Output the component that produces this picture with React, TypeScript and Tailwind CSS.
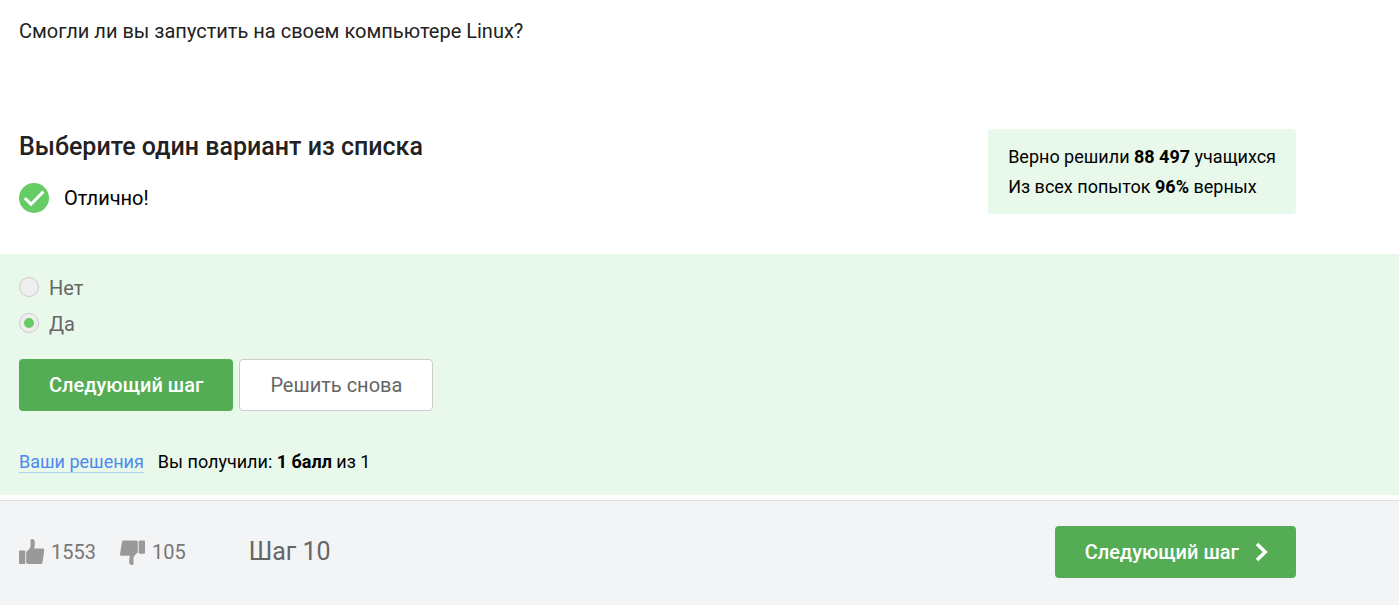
import { useState } from 'react';

function ThumbUp() {
  return (
    <svg viewBox="0 0 26 26" className="size-[26px] shrink-0" fill="#999999" aria-hidden="true">
      <rect x="0" y="11.6" width="6.3" height="13.4" rx="1" />
      <path d="M7.2 12.8 C8.8 11.8 11.3 9.2 11.7 7.2 L11.5 2 C11.4 .5 12.4 -.1 13.4 0 C15.2 .2 16 2 15.9 4.2 L15.3 9.6 H23.6 C24.8 9.6 25.3 10.4 25.2 11.4 L23.6 23.2 C23.4 24.4 22.8 24.9 21.6 24.9 H9.4 C8.2 24.9 7.2 24.2 7.2 23.2 Z" />
    </svg>
  );
}

function ThumbDown() {
  return (
    <svg viewBox="0 0 26 26" className="size-[26px] shrink-0" fill="#999999" aria-hidden="true">
      <rect x="18.7" y="1.4" width="6.3" height="13.4" rx="1" />
      <path d="M17.8 13.6 C16.2 14.6 13.8 17.3 13.4 19.3 L13.6 24.2 C13.6 25.5 12.7 26 11.7 26 C9.9 26 9 24.4 9.1 22.2 L9.8 16.7 H1.4 C.3 16.7 -.2 15.9 0 14.9 L1.9 3.2 C2.1 2 2.7 1.5 3.9 1.5 H15.6 C16.8 1.5 17.8 2.2 17.8 3.2 Z" />
    </svg>
  );
}

const options = ['Нет', 'Да'];

export default function App() {
  const [answer, setAnswer] = useState('Да');

  return (
    <div className="flex min-h-screen flex-col bg-white font-['Roboto',sans-serif] text-black">
      <main>
        <p className="px-[19px] pt-4 text-[20px] leading-[30px] text-[#222222]">
          Смогли ли вы запустить на своем компьютере Linux?
        </p>

        <section className="mt-[83px] flex items-start justify-between pr-[103px] pl-[19px]">
          <div>
            <h1 className="text-[25px] leading-9 font-medium text-[#222222]">
              Выберите один вариант из списка
            </h1>
            <div className="mt-[18px] flex items-center gap-[15px]">
              <svg viewBox="0 0 30 30" className="size-[30px]" aria-hidden="true">
                <circle cx="15" cy="15" r="15" fill="#66cc66" />
                <path d="M5.8 15.2 L12 21.2 L24.4 8.6" fill="none" stroke="#fff" strokeWidth="3" />
              </svg>
              <span className="text-[20px] leading-[30px]">Отлично!</span>
            </div>
          </div>
          <div className="rounded bg-[#e8f8ea] px-5 pt-[13px] pb-3 text-[18px] leading-[30px]">
            <p>
              Верно решили <b>88 497</b> учащихся
            </p>
            <p>
              Из всех попыток <b>96%</b> верных
            </p>
          </div>
        </section>

        <section className="mt-10 bg-[#e8f8ea] px-[19px] pt-4 pb-[18px]">
          <fieldset aria-label="Варианты ответа">
            {options.map((o) => (
              <label key={o} className="flex h-9 items-start gap-2.5 text-[20px] leading-9 text-[#666666]">
                <input
                  type="radio"
                  name="answer"
                  checked={answer === o}
                  onChange={() => setAnswer(o)}
                  className="mt-[7px] grid size-5 appearance-none place-items-center rounded-full border border-[#cccccc] bg-[#eeeeee] before:size-[10px] before:rounded-full checked:before:bg-[#66cc66]"
                />
                {o}
              </label>
            ))}
          </fieldset>
          <div className="mt-[17px] flex gap-1.5 text-[20px]">
            <button type="button" className="h-[52px] rounded bg-[#54ad54] px-[30px] font-medium text-white">
              Следующий шаг
            </button>
            <button type="button" className="h-[52px] rounded border border-[#cccccc] bg-white px-[30px] text-[#666666]">
              Решить снова
            </button>
          </div>
          <div className="mt-9 flex gap-3.5 text-[18px] leading-[30px]">
            <a
              href="#solutions"
              className="text-[#4d88f0] underline decoration-[#a8d4f0] decoration-1 underline-offset-4 [text-decoration-skip-ink:none]"
            >
              Ваши решения
            </a>
            <p>
              Вы получили: <b>1 балл</b> из 1
            </p>
          </div>
        </section>
      </main>

      <footer className="mt-[5px] flex flex-1 items-center border-t border-[#dddddd] bg-[#f3f4f6] pr-[103px] pb-0.5 pl-[19px] text-[#777777]">
        <button type="button" aria-label="Нравится: 1553" className="flex items-center gap-1.5 text-[20px]">
          <ThumbUp />
          1553
        </button>
        <button type="button" aria-label="Не нравится: 105" className="ml-6 flex items-center gap-1.5 text-[20px]">
          <ThumbDown />
          105
        </button>
        <span className="ml-[63px] text-[25px] text-[#666666]">Шаг 10</span>
        <button
          type="button"
          className="ml-auto flex h-[52px] items-center gap-4 rounded bg-[#54ad54] pr-7 pl-[30px] text-[20px] font-medium text-white"
        >
          Следующий шаг
          <svg viewBox="0 0 13 20" className="h-5 w-[13px]" fill="none" stroke="#fff" strokeWidth="3.5" aria-hidden="true">
            <path d="M2 2 L10.2 10 L2 18" />
          </svg>
        </button>
      </footer>
    </div>
  );
}
